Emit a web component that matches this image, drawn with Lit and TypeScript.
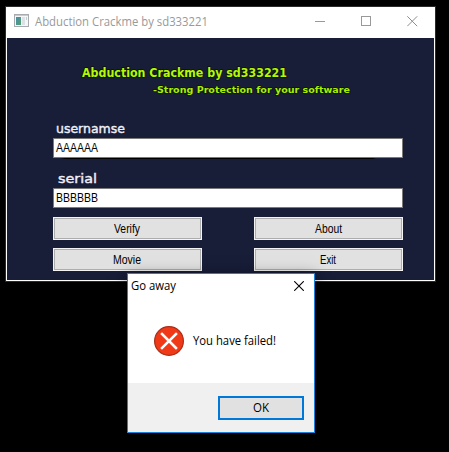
import { LitElement, html, css, svg } from "lit";
import { customElement, property } from "lit/decorators.js";

/** A single line of text fitted to a fixed advance width. */
@customElement("fit-text")
export class FitText extends LitElement {
  @property() text = "";
  @property({ type: Number }) width = 0;

  static styles = css`
    :host { display: block; flex: none; line-height: 0; }
    svg { display: block; height: 12px; overflow: visible; }
    text { fill: currentColor; paint-order: stroke; white-space: pre; }
  `;

  render() {
    return html`<svg width=${this.width}>
      ${svg`<text x="0" y="10" textLength=${this.width} lengthAdjust="spacingAndGlyphs">${this.text}</text>`}
    </svg>`;
  }
}

@customElement("crackme-window")
export class CrackmeWindow extends LitElement {
  static styles = css`
    :host {
      display: flex; flex-direction: column; box-sizing: border-box;
      width: 431px; height: 276px; border: 1px solid #2b2b2b; background: #fff;
    }
    .titlebar { display: flex; align-items: flex-start; height: 31px; flex: none; }
    .app-icon { margin: 7px 6px 0 8px; flex: none; }
    .title { margin-top: 9px; font: 12px "Open Sans", "Noto Sans", sans-serif; color: #999; }
    .controls { margin-left: auto; display: flex; gap: 35px; padding: 9px 17px 0 0; }
    .controls svg, .app-icon { display: block; }
    .client {
      flex: 1; margin: 0 1px 1px; background: #181d38; box-sizing: border-box;
      padding: 29px 30px 0 46px; display: flex; flex-direction: column;
    }
    .heading { color: #b4f80a; font: bold 11.5px "DejaVu Sans", sans-serif; margin-left: 29px; stroke: #0a1300; stroke-width: 1.4px; height: 12px; }
    .sub { color: #a8ee08; font: bold 9.5px "DejaVu Sans", sans-serif; margin: 4px 0 0 100px; stroke: #0a1300; stroke-width: 1.2px; height: 12px; }
    .caption { color: #eef0f8; font: 13px "DejaVu Sans", sans-serif; stroke: #eef0f8; stroke-width: .4px; height: 12px; }
    .user { margin: 28px 0 0 3px; }
    .serial { margin: 14px 0 0 5px; }
    .field {
      box-sizing: border-box; width: 350px; height: 20px; border: 1px solid #7a7a7a; background: #fff;
      padding: 3px 0 0 2px; color: #000; font: 12.3px "Liberation Sans", Arial, sans-serif; margin-top: 3px; flex: none;
    }
    .shade { height: 1px; flex: none; margin: 0 28px 0 7px; background: linear-gradient(90deg, transparent, #000 5px, #000 calc(100% - 3px), transparent); }
    .buttons { display: grid; grid-template-columns: 149px 149px; column-gap: 52px; row-gap: 8px; margin-top: 9px; }
    .button {
      box-sizing: border-box; height: 23px; border: 1px solid #f4f4f4; outline: 1px solid #adadad; outline-offset: -2px;
      background: #e1e1e1; color: #000; display: flex; justify-content: center; padding: 5px 1px 0 0;
      font: 12.3px "Liberation Sans", Arial, sans-serif;
    }
  `;

  render() {
    return html`
      <div class="titlebar">
        <svg class="app-icon" width="15" height="13" viewBox="0 0 15 13">
          <defs><linearGradient id="g" x2="1" y2="1"><stop stop-color="#4c8ca8" /><stop offset="1" stop-color="#52a070" /></linearGradient></defs>
          <rect x=".5" y=".5" width="14" height="12" fill="#f4f6f8" stroke="#a7abaf" />
          <path d="M1 1.5h13" stroke="#c5cbd1" />
          <rect x="2" y="3" width="5" height="8" fill="url(#g)" />
          <rect x="8" y="3" width="3" height="8" fill="#dde1e5" />
          <rect x="12" y="3" width="1" height="3" fill="#b9d3c8" />
        </svg>
        <fit-text class="title" text="Abduction Crackme by sd333221" width="173"></fit-text>
        <div class="controls">
          <svg width="11" height="11"><path d="M0 5.5h10" stroke="#999" /></svg>
          <svg width="11" height="11"><rect x=".5" y=".5" width="9" height="9" fill="none" stroke="#999" /></svg>
          <svg width="11" height="11"><path d="M.3.3l9.9 9.9M10.2.3L.3 10.2" stroke="#8c8c8c" /></svg>
        </div>
      </div>
      <div class="client">
        <fit-text class="heading" text="Abduction Crackme by sd333221" width="205"></fit-text>
        <fit-text class="sub" text="-Strong Protection for your software" width="197"></fit-text>
        <fit-text class="caption user" text="usernamse" width="69"></fit-text>
        <div class="field"><fit-text text="AAAAAA" width="42"></fit-text></div>
        <div class="shade"></div>
        <fit-text class="caption serial" text="serial" width="39"></fit-text>
        <div class="field"><fit-text text="BBBBBB" width="42"></fit-text></div>
        <div class="buttons">
          <div class="button"><fit-text text="Verify" width="26"></fit-text></div>
          <div class="button"><fit-text text="About" width="27"></fit-text></div>
          <div class="button"><fit-text text="Movie" width="28"></fit-text></div>
          <div class="button"><fit-text text="Exit" width="16"></fit-text></div>
        </div>
      </div>
    `;
  }
}

@customElement("message-box")
export class MessageBox extends LitElement {
  static styles = css`
    :host {
      display: flex; flex-direction: column; box-sizing: border-box; width: 188px; height: 160px;
      border: 1px solid #1883d7; background: #fff; color: #000;
      box-shadow: 0 3px 14px rgba(0, 0, 0, .5);
      font: 12px "Open Sans", "Noto Sans", sans-serif;
    }
    .bar { display: flex; justify-content: space-between; height: 29px; padding: 6px 10px 0 3px; box-sizing: border-box; flex: none; }
    .close { display: block; margin-top: 1px; }
    .body { display: flex; gap: 9px; padding: 23px 0 0 26px; flex: 1; }
    .body svg { display: block; flex: none; }
    .message { margin-top: 9px; }
    .footer { background: #f0f0f0; height: 49px; display: flex; justify-content: flex-end; padding: 13px 10px 0 0; box-sizing: border-box; flex: none; }
    .ok { box-sizing: border-box; width: 86px; height: 24px; border: 2px solid #0078d7; background: #e1e1e1; display: flex; justify-content: center; padding-top: 4px; }
  `;

  render() {
    return html`
      <div class="bar">
        <fit-text text="Go away" width="45"></fit-text>
        <svg class="close" width="10" height="10"><path d="M.2.2l9.6 9.6M9.8.2L.2 9.8" stroke="#000" stroke-width="1.1" /></svg>
      </div>
      <div class="body">
        <svg width="30" height="30" viewBox="0 0 30 30">
          <circle cx="15" cy="15" r="14.4" fill="#f03a17" stroke="#a82e1b" stroke-width="1.2" />
          <path d="M8 8l14 14M22 8L8 22" stroke="#fff" stroke-width="2.5" stroke-linecap="square" />
        </svg>
        <fit-text class="message" text="You have failed!" width="83"></fit-text>
      </div>
      <div class="footer"><div class="ok"><fit-text text="OK" width="16"></fit-text></div></div>
    `;
  }
}

@customElement("app-root")
export class AppRoot extends LitElement {
  static styles = css`
    :host { display: block; position: relative; width: 449px; height: 452px; background: #000; overflow: hidden; }
    .main { position: absolute; left: 5px; top: 6px; }
    .dialog { position: absolute; left: 127px; top: 273px; }
  `;

  render() {
    return html`
      <crackme-window class="main"></crackme-window>
      <message-box class="dialog"></message-box>
    `;
  }
}
